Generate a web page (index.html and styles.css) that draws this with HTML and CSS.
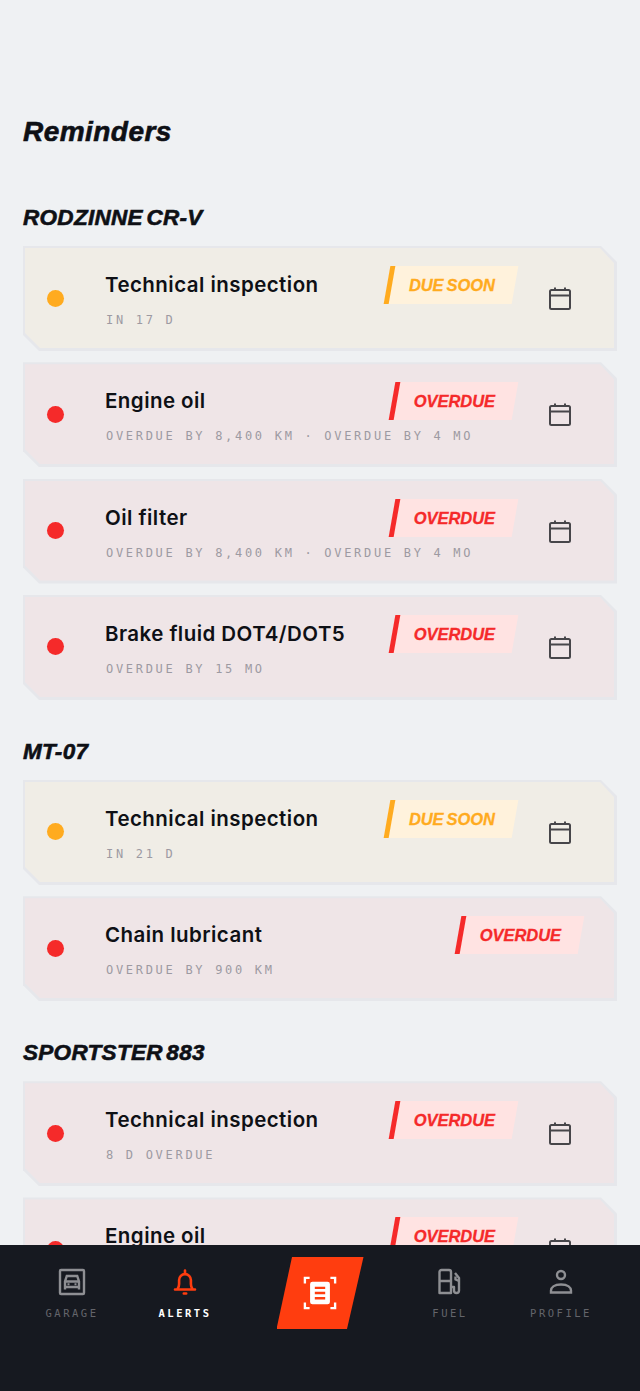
FILE: index.html
```html
<!DOCTYPE html>
<html lang="en">
<head>
<meta charset="utf-8">
<title>Reminders</title>
<link rel="stylesheet" href="styles.css">
</head>
<body>
<svg class="defs" width="0" height="0" aria-hidden="true">
  <symbol id="cal" viewBox="0 0 24 24">
    <rect x="2" y="4" width="20" height="19" rx="1.5" fill="none" stroke="currentColor" stroke-width="2"/>
    <path d="M2 9.5h20M7 1.5v3M17 1.5v3" fill="none" stroke="currentColor" stroke-width="2"/>
  </symbol>
</svg>
<div class="screen">
  <main class="content">
    <h1 class="page-title">Reminders</h1>

    <section class="group">
      <h2 class="group-title">RODZINNE CR-V</h2>
      <div class="card-list">
        <article class="card card-amber"><div class="card-in">
          <span class="dot"></span>
          <div class="body">
            <div class="top"><h3 class="name">Technical inspection</h3><span class="badge">DUE SOON</span></div>
            <p class="meta">IN 17 D</p>
          </div>
          <svg class="cal"><use href="#cal"/></svg>
        </div></article>
        <article class="card card-red"><div class="card-in">
          <span class="dot"></span>
          <div class="body">
            <div class="top"><h3 class="name">Engine oil</h3><span class="badge">OVERDUE</span></div>
            <p class="meta">OVERDUE BY 8,400 KM · OVERDUE BY 4 MO</p>
          </div>
          <svg class="cal"><use href="#cal"/></svg>
        </div></article>
        <article class="card card-red"><div class="card-in">
          <span class="dot"></span>
          <div class="body">
            <div class="top"><h3 class="name">Oil filter</h3><span class="badge">OVERDUE</span></div>
            <p class="meta">OVERDUE BY 8,400 KM · OVERDUE BY 4 MO</p>
          </div>
          <svg class="cal"><use href="#cal"/></svg>
        </div></article>
        <article class="card card-red"><div class="card-in">
          <span class="dot"></span>
          <div class="body">
            <div class="top"><h3 class="name">Brake fluid DOT4/DOT5</h3><span class="badge">OVERDUE</span></div>
            <p class="meta">OVERDUE BY 15 MO</p>
          </div>
          <svg class="cal"><use href="#cal"/></svg>
        </div></article>
      </div>
    </section>

    <section class="group">
      <h2 class="group-title">MT-07</h2>
      <div class="card-list">
        <article class="card card-amber"><div class="card-in">
          <span class="dot"></span>
          <div class="body">
            <div class="top"><h3 class="name">Technical inspection</h3><span class="badge">DUE SOON</span></div>
            <p class="meta">IN 21 D</p>
          </div>
          <svg class="cal"><use href="#cal"/></svg>
        </div></article>
        <article class="card card-red"><div class="card-in">
          <span class="dot"></span>
          <div class="body">
            <div class="top"><h3 class="name">Chain lubricant</h3><span class="badge">OVERDUE</span></div>
            <p class="meta">OVERDUE BY 900 KM</p>
          </div>
        </div></article>
      </div>
    </section>

    <section class="group">
      <h2 class="group-title">SPORTSTER 883</h2>
      <div class="card-list">
        <article class="card card-red"><div class="card-in">
          <span class="dot"></span>
          <div class="body">
            <div class="top"><h3 class="name">Technical inspection</h3><span class="badge">OVERDUE</span></div>
            <p class="meta">8 D OVERDUE</p>
          </div>
          <svg class="cal"><use href="#cal"/></svg>
        </div></article>
        <article class="card card-red"><div class="card-in">
          <span class="dot"></span>
          <div class="body">
            <div class="top"><h3 class="name">Engine oil</h3><span class="badge">OVERDUE</span></div>
            <p class="meta">OVERDUE BY 8,400 KM</p>
          </div>
          <svg class="cal"><use href="#cal"/></svg>
        </div></article>
      </div>
    </section>
  </main>

  <nav class="tabbar">
    <a class="tab tab-garage">
      <svg class="tab-icon" viewBox="0 0 28 28" fill="none" stroke="currentColor" stroke-width="2.4">
        <rect x="2" y="2" width="24" height="24" rx="1"/>
        <path d="M7 21.500V13.500l1.800-5.500h10.400L21 13.500v8M7 13.500h14M7 19h14"/>
        <path d="M9.500 16.200h2M16.500 16.200h2" stroke-width="2"/>
      </svg>
      <span class="tab-label">GARAGE</span>
    </a>
    <a class="tab tab-alerts">
      <svg class="tab-icon" viewBox="0 0 28 28" fill="none" stroke="currentColor" stroke-width="2.600" stroke-linecap="round" stroke-linejoin="round">
        <path d="M4 21.500h20M6.500 21c1.200-1.500 1.600-3 1.600-5v-4a5.900 5.900 0 0 1 11.800 0v4c0 2 .4 3.500 1.600 5"/>
        <path d="M14 2.500v3M12.800 25.500h2.400"/>
      </svg>
      <span class="tab-label">ALERTS</span>
    </a>
    <a class="fab">
      <svg class="fab-icon" viewBox="0 0 36 36" fill="none" stroke="#fff" stroke-width="2.500">
        <path d="M7 2H2v6M29 2h5v6M7 34H2v-6M29 34h5v-6"/>
        <rect x="7.500" y="6" width="21" height="24" rx="2.500" fill="#fff" stroke="none"/>
        <path d="M12.500 12.500h11M12.500 18h11M12.500 23.500h11" stroke="#ff3d0f"/>
      </svg>
    </a>
    <a class="tab tab-fuel">
      <svg class="tab-icon" viewBox="0 0 28 28" fill="none" stroke="currentColor" stroke-width="2.400" stroke-linejoin="round">
        <path d="M3.500 25V4a2 2 0 0 1 2-2h7.500a2 2 0 0 1 2 2v21zM3.500 13h11.500"/>
        <path d="M15 19h3v3.500a2.500 2.500 0 0 0 5 0V10l-4-5"/>
        <path d="M19.500 8.500v3l3.500 1.500"/>
      </svg>
      <span class="tab-label">FUEL</span>
    </a>
    <a class="tab tab-profile">
      <svg class="tab-icon" viewBox="0 0 28 28" fill="none" stroke="currentColor" stroke-width="2.400">
        <circle cx="14" cy="7" r="4"/>
        <path d="M4 24.500v-2c0-3 3-6 10-6s10 3 10 6v2z"/>
      </svg>
      <span class="tab-label">PROFILE</span>
    </a>
  </nav>
</div>
</body>
</html>
```

FILE: styles.css
```css
* { box-sizing: border-box; }
html, body { margin: 0; padding: 0; }
body { width: 640px; height: 1391px; overflow: hidden; background: #eff1f3; font-family: "Inter", "Liberation Sans", sans-serif; color: #0e1015; }
.defs { position: absolute; }
.screen { display: flex; flex-direction: column; height: 1391px; }
.content { flex: 1; min-height: 0; overflow: hidden; padding: 113px 23px 0; }
.page-title { margin: 0; font: italic 700 28px/38px "Liberation Sans", sans-serif; letter-spacing: .45px; -webkit-text-stroke: .6px #0e1015; }
.group { margin-top: 53px; }
.group + .group { margin-top: 38px; }
.group-title { margin: 0 0 14px; font: italic 700 22.500px/28px "Liberation Sans", sans-serif; letter-spacing: .3px; word-spacing: -3px; -webkit-text-stroke: .6px #0e1015; }
.card-list { display: flex; flex-direction: column; gap: 11.300px; }
.card { height: 105px; padding: 2px 3px 3px 2px; background: #e6e7eb; clip-path: polygon(0 0, 578px 0, 100% 16px, 100% 100%, 16px 100%, 0 89px); }
.card-in { display: flex; align-items: center; height: 100%; padding-left: 22px; padding-right: 30px; clip-path: polygon(0 0, 575px 0, 100% 15px, 100% 100%, 15px 100%, 0 85px); }
.card-amber .card-in { background: #f0ede6; --tone: #ffab1f; --pale: #fff2dc; }
.card-red .card-in { background: #efe5e7; --tone: #f52a2a; --pale: #ffe3e2; }
.dot { flex: none; width: 17px; height: 17px; border-radius: 50%; background: var(--tone); margin-right: 41px; }
.body { flex: 1; min-width: 0; align-self: flex-start; padding-top: 18px; }
.top { display: flex; align-items: flex-start; justify-content: space-between; }
.name { margin: 0; font-size: 20.500px; line-height: 38px; font-weight: 600; letter-spacing: .45px; white-space: nowrap; }
.badge { position: relative; z-index: 0; display: block; height: 38px; padding: 0 23px 0 24.500px; font: italic 700 16.500px/38px "Liberation Sans", sans-serif; letter-spacing: -.05px; word-spacing: -1.500px; color: var(--tone); -webkit-text-stroke: .3px var(--tone); white-space: nowrap; }
.badge::before { content: ""; position: absolute; z-index: -1; inset: 0 3px 0 3px; background: var(--pale); border-left: 5px solid var(--tone); transform: skewX(-10deg); }
.meta { margin: 7px 0 0; padding-left: 1px; font: 12px/18px "DejaVu Sans Mono", "Liberation Mono", monospace; letter-spacing: 2.700px; color: #9d9aa2; white-space: nowrap; }
.cal { flex: none; width: 24px; height: 24px; margin-left: 30px; margin-right: 12px; color: #47464a; }
.tabbar { flex: none; position: relative; height: 146px; background: #161920; }
.tab { position: absolute; top: 23px; display: flex; flex-direction: column; align-items: center; width: 100px; color: #8e8f93; }
.tab-garage { left: 22px; }
.tab-alerts { left: 135px; color: #ff3d0f; }
.tab-fuel { left: 400px; }
.tab-profile { left: 511px; }
.tab-icon { width: 28px; height: 28px; }
.tab-label { margin-top: 10px; font: 10.500px/14px "DejaVu Sans Mono", "Liberation Mono", monospace; letter-spacing: 2.500px; color: #64656b; }
.tab-alerts .tab-label { color: #fff; font-weight: 700; }
.fab { position: absolute; left: 276.500px; top: 12px; width: 87px; height: 72px; background: #ff3d0f; clip-path: polygon(15.500px 0, 100% 0, 70.500px 100%, 0 100%); display: flex; align-items: center; justify-content: center; }
.fab-icon { width: 34px; height: 34px; }
```
